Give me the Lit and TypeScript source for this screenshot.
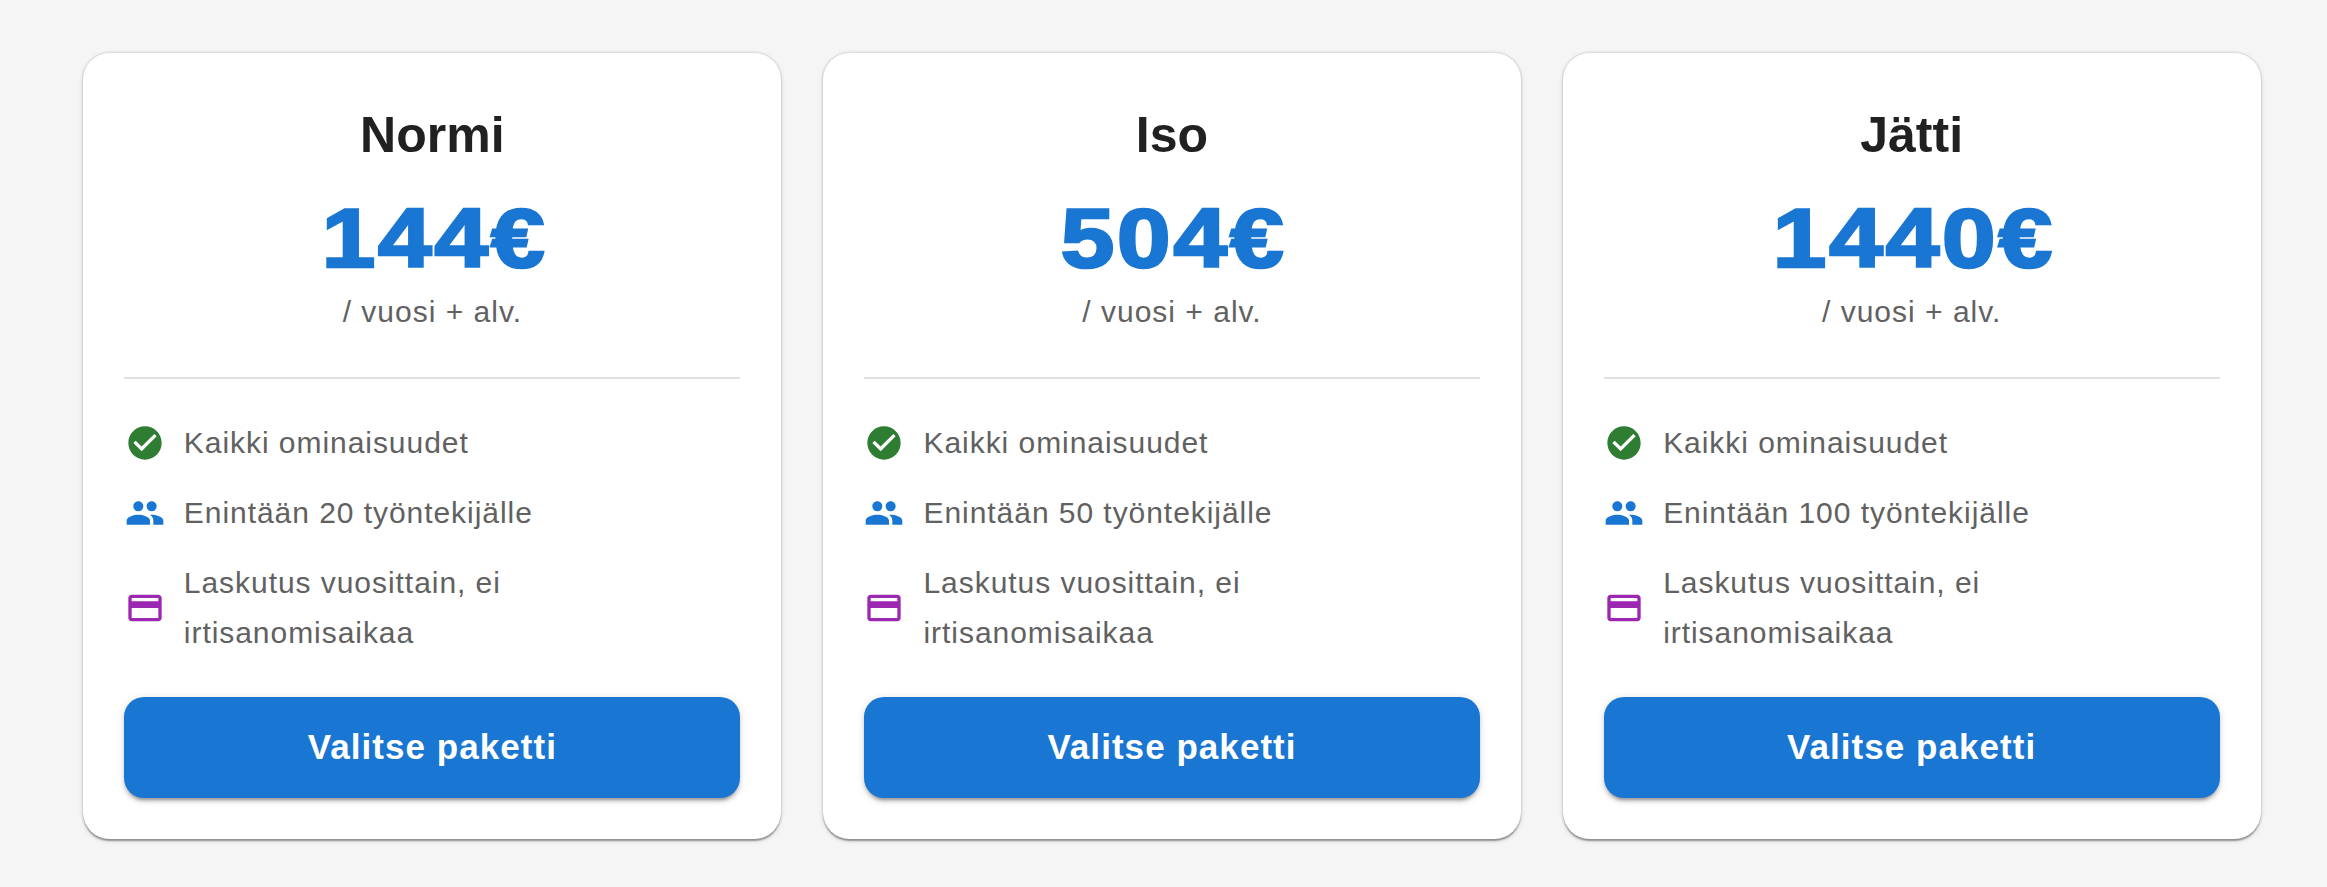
import { LitElement, html, css, svg } from "lit";
import { customElement } from "lit/decorators.js";

const ICONS = {
  check: svg`<path d="M12 2C6.48 2 2 6.48 2 12s4.48 10 10 10 10-4.48 10-10S17.52 2 12 2zm-2 15l-5-5 1.41-1.41L10 14.17l7.59-7.59L19 8l-9 9z"/>`,
  people: svg`<path d="M16 11c1.66 0 2.99-1.34 2.99-3S17.66 5 16 5c-1.66 0-3 1.34-3 3s1.34 3 3 3zm-8 0c1.66 0 2.99-1.34 2.99-3S9.66 5 8 5C6.34 5 5 6.34 5 8s1.34 3 3 3zm0 2c-2.33 0-7 1.17-7 3.5V19h14v-2.5c0-2.33-4.67-3.5-7-3.5zm8 0c-.29 0-.62.02-.97.05 1.16.84 1.97 1.97 1.97 3.45V19h6v-2.5c0-2.33-4.67-3.5-7-3.5z"/>`,
  card: svg`<path d="M20 4H4c-1.11 0-1.99.89-1.99 2L2 18c0 1.11.89 2 2 2h16c1.11 0 2-.89 2-2V6c0-1.11-.89-2-2-2zm0 14H4v-6h16v6zm0-10H4V6h16v2z"/>`,
};

const PLANS = [
  { name: "Normi", price: "144€", limit: "Enintään 20 työntekijälle" },
  { name: "Iso", price: "504€", limit: "Enintään 50 työntekijälle" },
  { name: "Jätti", price: "1440€", limit: "Enintään 100 työntekijälle" },
];

@customElement("app-root")
export class AppRoot extends LitElement {
  static styles = css`
    :host {
      display: block;
      box-sizing: border-box;
      width: 2327px;
      height: 887px;
      overflow: hidden;
      background: #f5f5f5;
      padding: 53.33px 66.33px 0 83.33px;
      font-family: "Liberation Sans", Arial, sans-serif;
    }
    .grid {
      display: grid;
      grid-template-columns: repeat(3, 1fr);
      gap: 41.67px;
    }
    .card {
      box-sizing: border-box;
      height: 786px;
      background: #fff;
      border-radius: 26.67px;
      padding: 40px 41px 41.67px;
      display: flex;
      flex-direction: column;
      box-shadow:
        0 0 0 1.5px rgba(0, 0, 0, 0.05),
        0 3.33px 1.67px -1.67px rgba(0, 0, 0, 0.2),
        0 1.67px 1.67px 0 rgba(0, 0, 0, 0.14),
        0 1.67px 5px 0 rgba(0, 0, 0, 0.12);
    }
    .head {
      text-align: center;
    }
    h2 {
      margin: 12px 0 0;
      font-size: 50px;
      line-height: 60px;
      font-weight: 700;
      color: #212121;
    }
    .price {
      margin-top: 22px;
      font-size: 83px;
      line-height: 104px;
      font-weight: 700;
      color: #1976d2;
    }
    .price span {
      display: inline-block;
      padding-left: 3px;
      transform: scaleX(1.16);
      letter-spacing: 2.5px;
      -webkit-text-stroke: 2.6px #1976d2;
    }
    .per {
      margin-top: 1px;
      font-size: 30px;
      line-height: 40px;
      letter-spacing: 1px;
      color: #616161;
    }
    hr {
      margin: 45px 0 0;
      border: 0;
      height: 1.67px;
      background: #e0e0e0;
    }
    ul {
      list-style: none;
      margin: 39px 0 0;
      padding: 0;
      display: flex;
      flex-direction: column;
      gap: 20px;
    }
    li {
      display: flex;
      align-items: center;
      font-size: 30px;
      line-height: 50px;
      letter-spacing: 0.95px;
      color: #616161;
    }
    li svg {
      flex: none;
      width: 40px;
      height: 40px;
      margin-left: 0.5px;
      margin-right: 19px;
      fill: currentColor;
    }
    .green { color: #2e7d32; }
    .blue { color: #1976d2; }
    .purple { color: #9c27b0; }
    li span { color: #616161; padding-right: 20px; }
    button {
      margin-top: auto;
      height: 101px;
      border: 0;
      border-radius: 20px;
      background: #1976d2;
      color: #fff;
      font: 700 35px "Liberation Sans", Arial, sans-serif;
      letter-spacing: 1.05px;
      box-shadow:
        0 5px 2px -3.33px rgba(0, 0, 0, 0.2),
        0 3.33px 3.33px 0 rgba(0, 0, 0, 0.14),
        0 1.67px 8.33px 0 rgba(0, 0, 0, 0.12);
    }
  `;

  private feature(cls: string, icon: unknown, text: string) {
    return html`<li class=${cls}>
      <svg viewBox="0 0 24 24" aria-hidden="true">${icon}</svg><span>${text}</span>
    </li>`;
  }

  render() {
    return html`<div class="grid">
      ${PLANS.map(
        (p) => html`<section class="card">
          <div class="head">
            <h2>${p.name}</h2>
            <div class="price"><span>${p.price}</span></div>
            <div class="per">/ vuosi + alv.</div>
          </div>
          <hr />
          <ul>
            ${this.feature("green", ICONS.check, "Kaikki ominaisuudet")}
            ${this.feature("blue", ICONS.people, p.limit)}
            ${this.feature("purple", ICONS.card, "Laskutus vuosittain, ei irtisanomisaikaa")}
          </ul>
          <button>Valitse paketti</button>
        </section>`
      )}
    </div>`;
  }
}
